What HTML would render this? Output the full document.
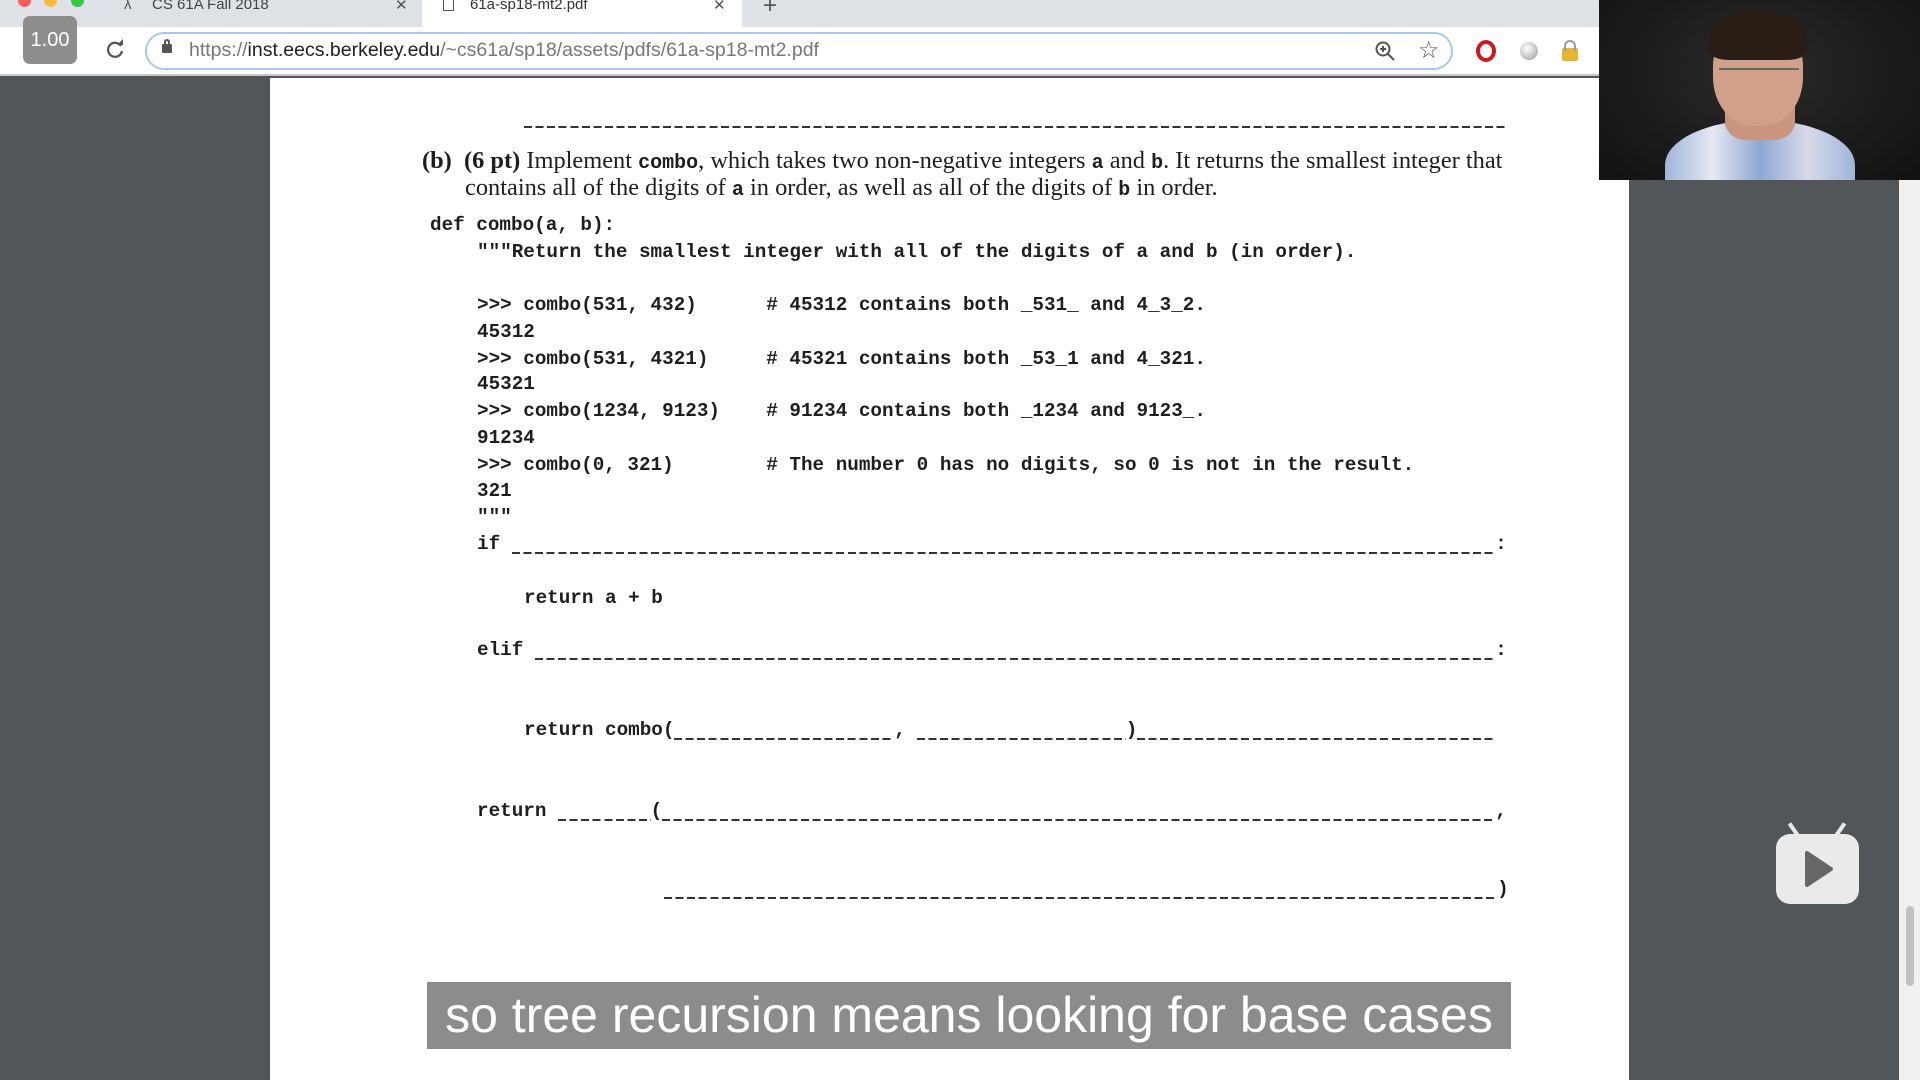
<!DOCTYPE html>
<html><head><meta charset="utf-8"><style>
*{margin:0;padding:0;box-sizing:border-box}
body{width:1920px;height:1080px;overflow:hidden;background:#525659;position:relative;font-family:"Liberation Sans",sans-serif}
.abs{position:absolute}
.mono{position:absolute;font-family:"Liberation Mono",monospace;font-size:19.3px;color:#1e1e1e;white-space:pre;line-height:24px;font-weight:bold;letter-spacing:0}
.serif{position:absolute;font-family:"Liberation Serif",serif;font-size:24.4px;color:#1e1e1e;white-space:nowrap;line-height:27px}
.u{color:transparent;background:repeating-linear-gradient(90deg,#333 0 8px,transparent 8px 11.58px) left 19px/100% 2px no-repeat}
</style></head><body>
<!-- tab bar -->
<div class="abs" style="left:0;top:0;width:1600px;height:27px;background:#dee1e6"></div>
<div class="abs" style="left:18px;top:-6px;width:13px;height:13px;border-radius:50%;background:#fc605c"></div>
<div class="abs" style="left:44px;top:-6px;width:13px;height:13px;border-radius:50%;background:#fdbc40"></div>
<div class="abs" style="left:71px;top:-6px;width:13px;height:13px;border-radius:50%;background:#34c84a"></div>
<div class="abs" style="left:124px;top:-4px;font-size:15px;color:#555">λ</div>
<div class="abs" style="left:152px;top:-4px;font-size:15px;color:#444">CS 61A Fall 2018</div>
<div class="abs" style="left:395px;top:-4px;font-size:15px;color:#555">✕</div>
<div class="abs" style="left:422px;top:0;width:320px;height:27px;background:#fff"></div>
<div class="abs" style="left:443px;top:-3px;width:11px;height:14px;border:1.5px solid #555"></div>
<div class="abs" style="left:470px;top:-4px;font-size:15px;color:#333">61a-sp18-mt2.pdf</div>
<div class="abs" style="left:713px;top:-4px;font-size:15px;color:#555">✕</div>
<div class="abs" style="left:763px;top:-8px;font-size:24px;color:#555">+</div>
<!-- toolbar -->
<div class="abs" style="left:0;top:27px;width:1600px;height:49px;background:#fff;border-bottom:2px solid #c8c8c8"></div>
<div class="abs" style="left:23px;top:16px;width:54px;height:48px;border-radius:7px;background:#8d8d8d;color:#fff;font-size:20px;text-align:center;line-height:48px">1.00</div>
<svg class="abs" style="left:104px;top:38px" width="22" height="22" viewBox="0 0 22 22"><path d="M17 8A7 7 0 1 0 18 13" fill="none" stroke="#555" stroke-width="2.2"/><path d="M13 7h6V1z" fill="#555"/></svg>
<div class="abs" style="left:145px;top:32px;width:1308px;height:38px;border:2px solid #a9c6ef;border-radius:19px;background:#fff"></div>
<div class="abs" style="left:162px;top:44px;width:10px;height:9px;background:#555;border-radius:1px"></div>
<div class="abs" style="left:164px;top:39px;width:6px;height:7px;border:2px solid #555;border-bottom:none;border-radius:3px 3px 0 0"></div>
<div class="abs" style="left:189px;top:39px;font-size:19.5px;color:#777;white-space:nowrap">https://<span style="color:#222">inst.eecs.berkeley.edu</span>/~cs61a/sp18/assets/pdfs/61a-sp18-mt2.pdf</div>
<svg class="abs" style="left:1374px;top:40px" width="22" height="22" viewBox="0 0 22 22"><circle cx="9" cy="9" r="6.5" fill="none" stroke="#555" stroke-width="2"/><path d="M14 14l6 6M9 6v6M6 9h6" stroke="#555" stroke-width="2"/></svg>
<div class="abs" style="left:1418px;top:36px;font-size:24px;color:#555">☆</div>
<div class="abs" style="left:1476px;top:40px;width:20px;height:22px;border-radius:50%;border:4px solid #d0181c"></div>
<div class="abs" style="left:1520px;top:42px;width:18px;height:18px;border-radius:50%;background:radial-gradient(circle at 40% 35%,#fff,#999)"></div>
<div class="abs" style="left:1562px;top:48px;width:16px;height:13px;background:#e5b52f;border-radius:2px"></div>
<div class="abs" style="left:1564px;top:40px;width:12px;height:11px;border:2px solid #999;border-bottom:none;border-radius:6px 6px 0 0"></div>
<!-- page -->
<div class="abs" style="left:270px;top:78px;width:1359px;height:1002px;background:#fff"></div>
<div class="abs" style="left:1899px;top:78px;width:21px;height:1002px;background:#f1f1f1"></div>
<div class="abs" style="left:1906px;top:906px;width:8px;height:80px;background:#c1c1c1;border-radius:4px"></div>

<div class="mono" style="left:524px;top:106px"><span class="u">_____________________________________________________________________________________</span></div>
<div class="serif" style="left:422px;top:147px"><b>(b)</b>&nbsp; <b>(6 pt)</b> Implement <span style="font-family:'Liberation Mono',monospace;font-size:20px;font-weight:bold">combo</span>, which takes two non-negative integers <span style="font-family:'Liberation Mono',monospace;font-size:20px;font-weight:bold">a</span> and <span style="font-family:'Liberation Mono',monospace;font-size:20px;font-weight:bold">b</span>. It returns the smallest integer that</div>
<div class="serif" style="left:465px;top:174px">contains all of the digits of <span style="font-family:'Liberation Mono',monospace;font-size:20px;font-weight:bold">a</span> in order, as well as all of the digits of <span style="font-family:'Liberation Mono',monospace;font-size:20px;font-weight:bold">b</span> in order.</div>

<div class="mono" style="left:430px;top:213px">def combo(a, b):</div>
<div class="mono" style="left:477px;top:240px">"""Return the smallest integer with all of the digits of a and b (in order).</div>
<div class="mono" style="left:477px;top:293px">&gt;&gt;&gt; combo(531, 432)      # 45312 contains both _531_ and 4_3_2.</div>
<div class="mono" style="left:477px;top:320px">45312</div>
<div class="mono" style="left:477px;top:347px">&gt;&gt;&gt; combo(531, 4321)     # 45321 contains both _53_1 and 4_321.</div>
<div class="mono" style="left:477px;top:372px">45321</div>
<div class="mono" style="left:477px;top:399px">&gt;&gt;&gt; combo(1234, 9123)    # 91234 contains both _1234 and 9123_.</div>
<div class="mono" style="left:477px;top:426px">91234</div>
<div class="mono" style="left:477px;top:453px">&gt;&gt;&gt; combo(0, 321)        # The number 0 has no digits, so 0 is not in the result.</div>
<div class="mono" style="left:477px;top:479px">321</div>
<div class="mono" style="left:477px;top:505px">"""</div>
<div class="mono" style="left:477px;top:532px">if <span class="u">_____________________________________________________________________________________</span>:</div>
<div class="mono" style="left:524px;top:586px">return a + b</div>
<div class="mono" style="left:477px;top:638px">elif <span class="u">___________________________________________________________________________________</span>:</div>
<div class="mono" style="left:524px;top:718px">return combo(<span class="u">___________________</span>, <span class="u">__________________</span>)<span class="u">_______________________________</span></div>
<div class="mono" style="left:477px;top:799px">return <span class="u">________</span>(<span class="u">________________________________________________________________________</span>,</div>
<div class="mono" style="left:664px;top:877px"><span class="u">________________________________________________________________________</span>)</div>

<!-- subtitle -->
<div class="abs" style="left:427px;top:982px;width:1084px;height:67px;background:#8c8c8c;color:#fff;font-size:50px;line-height:67px;text-align:center;white-space:nowrap">so tree recursion means looking for base cases</div>

<!-- webcam -->
<div class="abs" style="left:1599px;top:0;width:321px;height:180px;background:radial-gradient(ellipse at 50% 40%,#2a2a2a,#111);overflow:hidden">
 <div class="abs" style="left:66px;top:120px;width:190px;height:90px;border-radius:50% 50% 0 0;background:linear-gradient(90deg,#9fb4d8,#e6e9f3,#8ea6d2,#d7dbe9,#9fb4d8)"></div>
 <div class="abs" style="left:126px;top:80px;width:70px;height:60px;background:#c9957d;border-radius:30%"></div>
 <div class="abs" style="left:114px;top:18px;width:90px;height:108px;border-radius:45%;background:#d0a088"></div>
 <div class="abs" style="left:110px;top:12px;width:98px;height:48px;border-radius:50% 50% 20% 20%;background:#2a1d16"></div>
 <div class="abs" style="left:120px;top:68px;width:80px;height:12px;border-top:2px solid #666"></div>
</div>
<!-- bilibili play -->
<div class="abs" style="left:1776px;top:834px;width:83px;height:70px;border-radius:14px;background:#eaeaea"></div>
<div class="abs" style="left:1792px;top:822px;width:4px;height:16px;background:#eaeaea;transform:rotate(-35deg)"></div>
<div class="abs" style="left:1838px;top:822px;width:4px;height:16px;background:#eaeaea;transform:rotate(35deg)"></div>
<svg class="abs" style="left:1804px;top:850px" width="30" height="38" viewBox="0 0 30 38"><path d="M3 3L27 19L3 35Z" fill="#666" stroke="#666" stroke-width="4" stroke-linejoin="round"/></svg>
</body></html>
